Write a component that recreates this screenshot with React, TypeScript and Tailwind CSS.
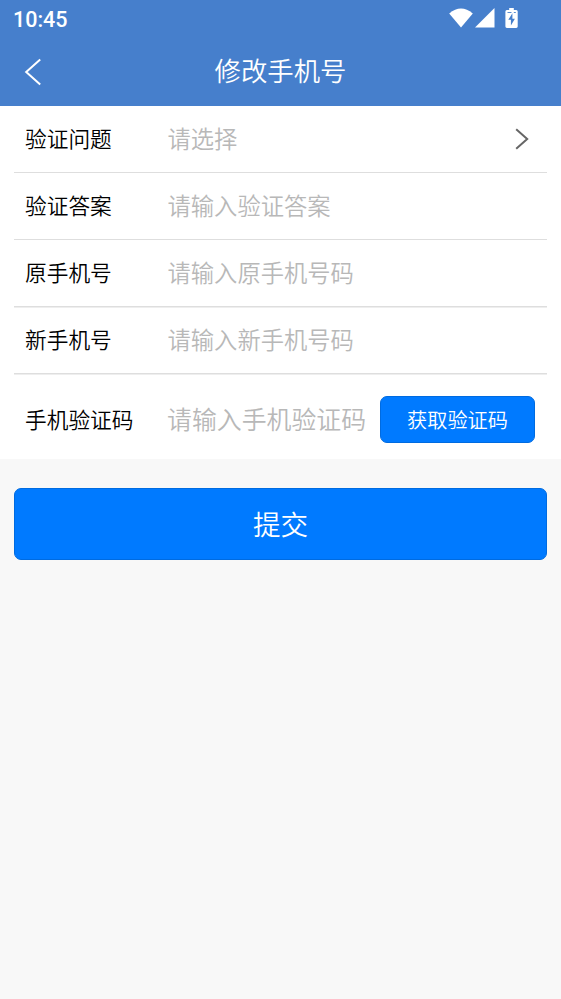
import React, { useState } from 'react';

interface Field {
  label: string;
  placeholder: string;
  select?: boolean;
}

const FIELDS: Field[] = [
  { label: '验证问题', placeholder: '请选择', select: true },
  { label: '验证答案', placeholder: '请输入验证答案' },
  { label: '原手机号', placeholder: '请输入原手机号码' },
  { label: '新手机号', placeholder: '请输入新手机号码' },
];

const StatusBar: React.FC = () => (
  <div className="flex h-[38px] items-center justify-between pl-[13px] pr-[43px]">
    <span className="pt-[2px] font-[Roboto] text-[21.5px] font-medium leading-[36px] text-white">10:45</span>
    <div className="flex items-center pb-[2px]">
      <svg className="h-[20px] w-[24px]" viewBox="0 0 24 20" fill="#fff">
        <path d="M0.2 5.5Q12 -4.5 23.8 5.5L12 19.4Z" />
      </svg>
      <svg className="ml-[2px] h-[20px] w-[20px]" viewBox="0 0 20 20" fill="#fff">
        <path d="M19.5 0v19.5H0z" />
      </svg>
      <svg className="ml-[10px] h-[20px] w-[13px]" viewBox="0 0 13 20">
        <path d="M4.2 0h4.6v2h2.4q1.5 0 1.5 1.5v15q0 1.4-1.5 1.4H1.9q-1.5 0-1.5-1.4v-15Q.4 2 1.9 2h2.3z" fill="#fff" />
        <path d="M2.5 4.5h4M8.8 4.5h2" stroke="#467fcc" strokeWidth="0.9" />
        <path d="M7.4 5.2 3.3 11.7h2.6V17.5l4-6.7H7.4z" fill="#467fcc" />
      </svg>
    </div>
  </div>
);

const FieldRow: React.FC<{ field: Field }> = ({ field }) => (
  <div className="mx-[14px] flex h-[67.1px] items-center border-b border-[#dedede] pl-[11px] pr-[18px] nth-[n+3]:shadow-[0_1px_0_#eeeeee]">
    <label className="w-[142.5px] shrink-0 pb-[2px] text-[21.7px] text-black">{field.label}</label>
    {field.select ? (
      <button className="flex flex-1 items-center justify-between text-[23.3px] text-[#b8b8b8]">
        <span className="pb-[2px]">{field.placeholder}</span>
        <svg className="h-[22px] w-[14px]" viewBox="0 0 14 22" fill="none" stroke="#666" strokeWidth="2">
          <path d="M1.2 1.2 12.2 11 1.2 20.8" />
        </svg>
      </button>
    ) : (
      <input
        className="min-w-0 flex-1 bg-transparent pb-[2px] text-[23.3px] text-black outline-none placeholder:text-[#b8b8b8]"
        placeholder={field.placeholder}
      />
    )}
  </div>
);

const App: React.FC = () => {
  const [code, setCode] = useState('');

  return (
    <div className="min-h-screen bg-[#f8f8f8] font-['Noto_Sans_CJK_SC_DemiLight','Noto_Sans_CJK_SC',sans-serif] font-[350]">
      <header className="h-[106px] bg-[#467fcc]">
        <StatusBar />
        <div className="grid h-[68px] grid-cols-[60px_1fr_60px] items-center">
          <button className="pl-[24px]" aria-label="返回">
            <svg className="h-[28px] w-[18px]" viewBox="0 0 18 28" fill="none" stroke="#fff" strokeWidth="2">
              <path d="M16.2 1.4 2.2 14l14 12.6" />
            </svg>
          </button>
          <h1 className="pb-[4px] text-center text-[26.4px] font-[350] leading-[40px] text-white">修改手机号</h1>
        </div>
      </header>

      <section className="h-[353px] bg-white">
        {FIELDS.map((field) => (
          <FieldRow key={field.label} field={field} />
        ))}
        <div className="mx-[14px] flex h-[84px] items-center pl-[11px] pr-[12px] pt-[7px]">
          <label className="w-[142px] shrink-0 pb-[2px] text-[21.7px] text-black">手机验证码</label>
          <input
            value={code}
            onChange={(e) => setCode(e.target.value)}
            className="min-w-0 flex-1 bg-transparent pb-[2px] text-[24.9px] text-black outline-none placeholder:text-[#b8b8b8]"
            placeholder="请输入手机验证码"
          />
          <button className="h-[47px] w-[155px] shrink-0 rounded-[7px] border border-[#006be0] bg-[#007aff] text-[20.2px] text-white">
            获取验证码
          </button>
        </div>
      </section>

      <div className="px-[14px] pt-[29.4px]">
        <button className="h-[72px] w-full rounded-[7px] border border-[#006be0] bg-[#007aff] pb-[2px] text-[27.6px] text-white">
          提交
        </button>
      </div>
    </div>
  );
};

export default App;
